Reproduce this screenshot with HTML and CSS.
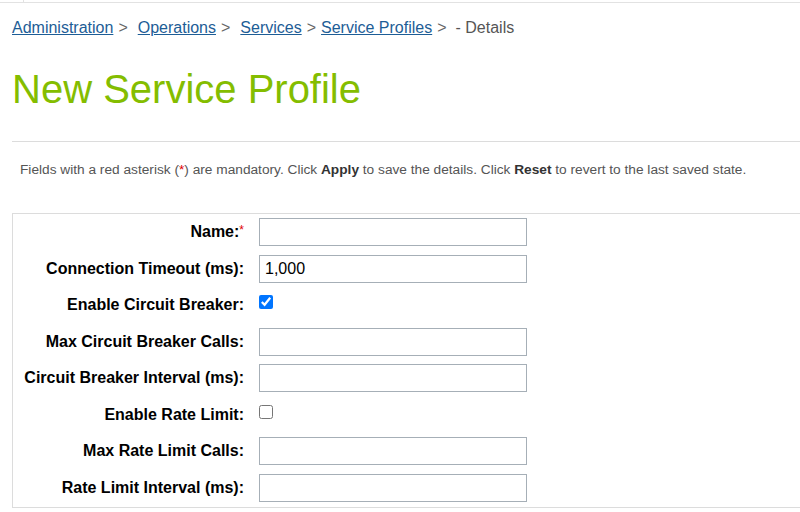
FILE: index.html
```html
<!DOCTYPE html>
<html lang="en">
<head>
    <meta charset="UTF-8">
    <meta name="viewport" content="width=device-width, initial-scale=1.0">
    <title>New Service Profile</title>
    <link rel="stylesheet" href="styles.css">
</head>
<body>
    <div class="topline"><span class="tick"></span></div>

    <nav class="crumbs">
        <a href="#">Administration</a><span class="sep">&gt;</span><a href="#">Operations</a><span class="sep">&gt;</span><a href="#">Services</a><span class="sep tight">&gt;</span><a href="#">Service Profiles</a><span class="sep mid">&gt;</span><span class="current">- Details</span>
    </nav>

    <h1>New Service Profile</h1>
    <div class="rule"></div>

    <p class="hint">Fields with a red asterisk (<span class="req">*</span>) are mandatory. Click <b>Apply</b> to save the details. Click <b>Reset</b> to revert to the last saved state.</p>

    <form class="panel">
        <label for="name">Name:<span class="req">*</span></label>
        <input type="text" id="name">

        <label for="timeout">Connection Timeout (ms):</label>
        <input type="text" id="timeout" value="1,000">

        <label for="cb">Enable Circuit Breaker:</label>
        <span class="check"><input type="checkbox" id="cb" checked></span>

        <label for="cbcalls">Max Circuit Breaker Calls:</label>
        <input type="text" id="cbcalls">

        <label for="cbint">Circuit Breaker Interval (ms):</label>
        <input type="text" id="cbint">

        <label for="rl">Enable Rate Limit:</label>
        <span class="check"><input type="checkbox" id="rl"></span>

        <label for="rlcalls">Max Rate Limit Calls:</label>
        <input type="text" id="rlcalls">

        <label for="rlint">Rate Limit Interval (ms):</label>
        <input type="text" id="rlint">
    </form>
</body>
</html>
```

FILE: styles.css
```css
@charset "UTF-8";

html {
    font-family: "Liberation Sans", Arial, Helvetica, sans-serif;
}

body {
    margin: 0;
    background-color: white;
    color: #333;
}

.topline {
    height: 2px;
    border-bottom: 1px solid #e2e2e2;
    padding-left: 23px;
}
.tick {
    display: block;
    width: 1px;
    height: 2px;
    background-color: #e2e2e2;
}

.crumbs {
    margin: 16px 0 0 12px;
    font-size: 16px;
    line-height: 18px;
    white-space: nowrap;
}
.crumbs a {color: #1d5d96; text-decoration: underline;}
.crumbs .sep {color: #666; margin: 0 10px 0 5px;}
.crumbs .sep.tight {margin-right: 5px;}
.crumbs .sep.mid {margin-right: 9px;}
.crumbs .current {color: #555;}

h1 {
    margin: 29px 0 0 12px;
    font-size: 40px;
    line-height: 46px;
    font-weight: normal;
    color: #84bd00;
}

.rule {
    margin: 29px 0 0 12px;
    border-top: 1px solid #dcdcdc;
}

.hint {
    margin: 20px 0 0 20px;
    font-size: 13.7px;
    line-height: 16px;
    color: #555;
}
.hint b {color: #333;}

.req {color: #e00000;}

.panel {
    display: grid;
    grid-template-columns: 231px 268px;
    grid-auto-rows: 28px;
    column-gap: 15px;
    row-gap: 8.5px;
    margin: 35px 0 0 12px;
    padding: 4px 0 5px;
    border: 1px solid #dcdcdc;
    border-right: none;
}

.panel label {
    align-self: center;
    text-align: right;
    font-size: 16px;
    font-weight: bold;
    color: #000;
    white-space: nowrap;
}
.panel label .req {
    font-size: 12px;
    vertical-align: top;
    font-weight: normal;
}

.panel input[type="text"] {
    box-sizing: border-box;
    width: 268px;
    height: 28px;
    margin: 0;
    padding: 0 5px;
    border: 1px solid #a6afb7;
    font-family: inherit;
    font-size: 16px;
    color: #000;
}

.check {
    display: block;
}
.check input {
    width: 14px;
    height: 14px;
    margin: 4px 0 0 0;
}
```
